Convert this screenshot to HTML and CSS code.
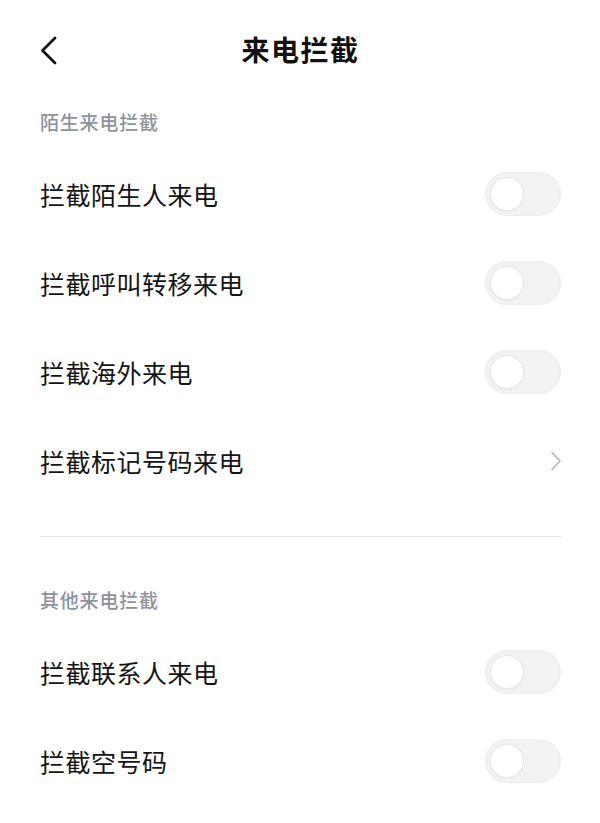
FILE: index.html
```html
<!DOCTYPE html>
<html lang="zh-CN">
<head>
<meta charset="utf-8">
<title>来电拦截</title>
<link rel="stylesheet" href="styles.css">
</head>
<body>
<div class="page">
  <header class="topbar">
    <div class="back">
      <svg width="20" height="30" viewBox="0 0 20 30"><path d="M15 3 L2.5 15.5 L15 28" fill="none" stroke="#111" stroke-width="2.8" stroke-linecap="round" stroke-linejoin="round"/></svg>
    </div>
    <h1 class="title">来电拦截</h1>
    <div></div>
  </header>

  <section class="group">
    <div class="group-title">陌生来电拦截</div>
    <div class="row"><span class="label">拦截陌生人来电</span><span class="switch"><span class="knob"></span></span></div>
    <div class="row"><span class="label">拦截呼叫转移来电</span><span class="switch"><span class="knob"></span></span></div>
    <div class="row"><span class="label">拦截海外来电</span><span class="switch"><span class="knob"></span></span></div>
    <div class="row"><span class="label">拦截标记号码来电</span>
      <svg class="arrow" width="12" height="20" viewBox="0 0 12 20"><path d="M2 1.5 L10 10 L2 18.5" fill="none" stroke="#b5b5b5" stroke-width="1.6" stroke-linecap="round" stroke-linejoin="round"/></svg>
    </div>
  </section>

  <div class="divider"></div>

  <section class="group">
    <div class="group-title second">其他来电拦截</div>
    <div class="row"><span class="label">拦截联系人来电</span><span class="switch"><span class="knob"></span></span></div>
    <div class="row"><span class="label">拦截空号码</span><span class="switch"><span class="knob"></span></span></div>
  </section>
</div>
</body>
</html>
```

FILE: styles.css
```css
* { box-sizing: border-box; }
html, body { margin: 0; padding: 0; background: #fff; }
body {
  font-family: "Noto Sans CJK SC", "Noto Sans", sans-serif;
  color: #141414;
}
.page { width: 600px; padding: 0 39px 0 40px; }
.topbar {
  height: 98px;
  display: grid;
  grid-template-columns: 1fr auto 1fr;
  align-items: center;
}
.back { display: flex; align-items: center; height: 30px; padding-top: 2px; }
.title {
  margin: 0;
  font-size: 28px;
  font-weight: 700;
  line-height: 40px;
  color: #111;
  letter-spacing: 1.5px;
}
.group-title {
  font-size: 19px;
  line-height: 20px;
  color: #8e929c;
  font-weight: 500;
  padding: 14px 0 17px;
  letter-spacing: 0.8px;
}
.group-title.second { padding-top: 53px; }
.row {
  height: 89px;
  display: flex;
  align-items: center;
  justify-content: space-between;
}
.label {
  font-size: 25px;
  line-height: 30px;
  letter-spacing: 0.5px;
  color: #141414;
}
.switch {
  width: 76px;
  height: 44px;
  border-radius: 22px;
  background: #f2f2f3;
  border: 1px solid #ececee;
  display: flex;
  align-items: center;
  padding-left: 4px;
}
.knob {
  width: 34px;
  height: 34px;
  border-radius: 50%;
  background: #fff;
  border: 1px solid #e6e6e8;
  box-shadow: 0 1px 2px rgba(0,0,0,0.04);
}
.arrow { margin-right: -1px; }
.divider {
  height: 1px;
  background: #e3e3e5;
  margin-top: 31px;
}
```
